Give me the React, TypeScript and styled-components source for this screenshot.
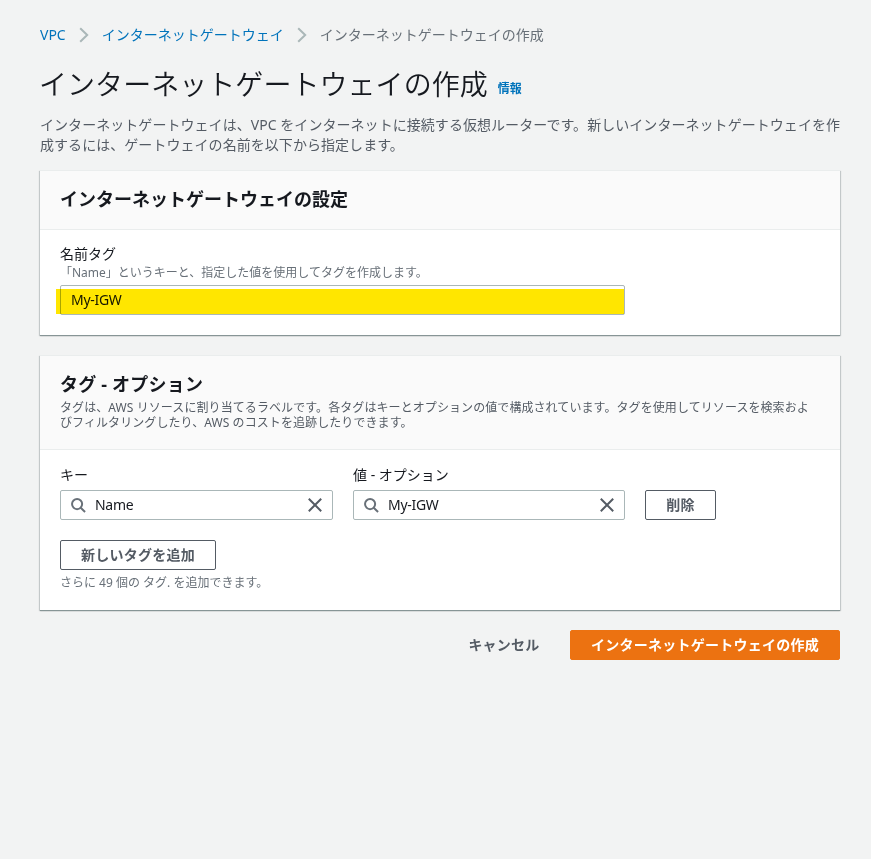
import React from "react";
import styled, { createGlobalStyle } from "styled-components";

const GlobalStyle = createGlobalStyle`
  *, *::before, *::after { box-sizing: border-box; }
  body {
    margin: 0;
    background: #f2f3f3;
    color: #16191f;
    font-family: "Noto Sans", "Noto Sans CJK JP", sans-serif;
    font-size: 14px;
    line-height: 20px;
  }
  h1, h2, p { margin: 0; }
  button, input { font: inherit; }
`;

const Page = styled.main`
  width: 871px;
  min-height: 859px;
  padding: 24px 31px 0 40px;
  background: #f2f3f3;
`;

const Breadcrumbs = styled.nav`
  display: flex;
  align-items: center;
  height: 22px;
  white-space: nowrap;
`;

const Crumb = styled.a<{ $current?: boolean }>`
  color: ${(p) => (p.$current ? "#687078" : "#0073bb")};
  text-decoration: none;
`;

const Chevron = styled.svg`
  width: 10px;
  height: 16px;
  margin: 0 13px;
  flex: none;
  fill: none;
  stroke: #aab7b8;
  stroke-width: 2;
`;

const TitleRow = styled.div`
  display: flex;
  align-items: flex-start;
  gap: 10px;
  height: 36px;
  margin: 20px 0 0 -1px;
  white-space: nowrap;
`;

const Title = styled.h1`
  font-size: 28px;
  line-height: 36px;
  font-weight: 350;
  letter-spacing: 0.05px;
`;

const InfoLink = styled.a`
  padding-top: 15px;
  color: #0073bb;
  font-size: 12px;
  line-height: 16px;
  font-weight: 700;
`;

const Intro = styled.p`
  margin-top: 13px;
  color: #545b64;
  letter-spacing: 0.05px;
  white-space: nowrap;
`;

const Card = styled.section<{ $gap: number }>`
  width: 800px;
  margin-top: ${(p) => p.$gap}px;
  background: #fff;
  border-top: 1px solid #eaeded;
  box-shadow: 0 1px 0 0 #879596, 0 1px 1px 0 rgba(0, 28, 36, 0.3),
    1px 1px 1px 0 rgba(0, 28, 36, 0.15), -1px 1px 1px 0 rgba(0, 28, 36, 0.15);
`;

const CardHeader = styled.header<{ $height: number }>`
  height: ${(p) => p.$height}px;
  padding: 17px 20px 0;
  background: #fafafa;
  border-bottom: 1px solid #eaeded;
`;

const CardTitle = styled.h2<{ $tracking?: number }>`
  font-size: 18px;
  line-height: 22px;
  font-weight: 700;
  letter-spacing: ${(p) => p.$tracking ?? 0}px;
`;

const CardDescription = styled.p`
  margin-top: 5px;
  color: #545b64;
  font-size: 12px;
  line-height: 15px;
  letter-spacing: 0.08px;
  white-space: nowrap;
`;

const CardBody = styled.div<{ $top: number; $bottom: number }>`
  padding: ${(p) => p.$top}px 20px ${(p) => p.$bottom}px;
`;

const Label = styled.label`
  display: block;
  line-height: 20px;
`;

const Hint = styled.p`
  margin-top: 1px;
  color: #687078;
  font-size: 12px;
  line-height: 16px;
`;

const InputBox = styled.div<{ $width: number; $gap: number }>`
  position: relative;
  display: flex;
  align-items: center;
  width: ${(p) => p.$width}px;
  height: 30px;
  margin-top: ${(p) => p.$gap}px;
  padding: 0 10px;
  background: #fff;
  border: 1px solid #aab7b8;
  border-radius: 2px;
`;

const TextInput = styled.input`
  flex: 1;
  min-width: 0;
  height: 28px;
  padding: 0 0 2px;
  border: 0;
  outline: 0;
  background: transparent;
  color: #16191f;
  letter-spacing: -0.3px;
`;

const Marker = styled.span`
  position: absolute;
  left: -5px;
  right: 0;
  top: 3px;
  bottom: 0;
  background: #ffe600;
  mix-blend-mode: multiply;
  pointer-events: none;
`;

const SearchIcon = styled.svg`
  width: 15px;
  height: 15px;
  margin-right: 9px;
  flex: none;
  fill: none;
  stroke: #687078;
  stroke-width: 2.1;
`;

const ClearIcon = styled.svg`
  width: 14px;
  height: 14px;
  flex: none;
  fill: none;
  stroke: #545b64;
  stroke-width: 2;
`;

const TagRow = styled.div`
  display: flex;
  align-items: flex-end;
  gap: 20px;
  margin-bottom: 20px;
`;

const Button = styled.button<{ $kind?: "primary" | "link"; $width: number }>`
  display: block;
  width: ${(p) => p.$width}px;
  height: 30px;
  padding: 0;
  border-radius: 2px;
  border: 1px solid
    ${(p) => (p.$kind === "primary" ? "#ec7211" : p.$kind === "link" ? "transparent" : "#545b64")};
  background: ${(p) => (p.$kind === "primary" ? "#ec7211" : p.$kind === "link" ? "transparent" : "#fff")};
  color: ${(p) => (p.$kind === "primary" ? "#fff" : "#545b64")};
  font-weight: 700;
  line-height: 20px;
  letter-spacing: 0.25px;
  white-space: nowrap;
`;

const LimitHint = styled(Hint)`
  margin-top: 5px;
`;

const Actions = styled.footer`
  display: flex;
  justify-content: flex-end;
  gap: 10px;
  width: 800px;
  margin-top: 20px;
`;

const Separator = () => (
  <Chevron viewBox="0 0 10 16">
    <path d="M1.2 1.2 L8.2 8 L1.2 14.8" />
  </Chevron>
);

interface TagFieldProps {
  label: string;
  value: string;
  width: number;
}

const TagField = ({ label, value, width }: TagFieldProps) => (
  <div>
    <Label>{label}</Label>
    <InputBox $width={width} $gap={5}>
      <SearchIcon viewBox="0 0 16 16">
        <circle cx="6.5" cy="6.5" r="5.4" />
        <path d="M10.4 10.4 L15 15" />
      </SearchIcon>
      <TextInput defaultValue={value} />
      <ClearIcon viewBox="0 0 14 14">
        <path d="M0.8 0.8 L13.2 13.2 M13.2 0.8 L0.8 13.2" />
      </ClearIcon>
    </InputBox>
  </div>
);

export default function App() {
  return (
    <>
      <GlobalStyle />
      <Page lang="ja">
        <Breadcrumbs>
          <Crumb>VPC</Crumb>
          <Separator />
          <Crumb>インターネットゲートウェイ</Crumb>
          <Separator />
          <Crumb $current>インターネットゲートウェイの作成</Crumb>
        </Breadcrumbs>

        <TitleRow>
          <Title>インターネットゲートウェイの作成</Title>
          <InfoLink>情報</InfoLink>
        </TitleRow>
        <Intro>
          インターネットゲートウェイは、VPC をインターネットに接続する仮想ルーターです。新しいインターネットゲートウェイを作
          <br />
          成するには、ゲートウェイの名前を以下から指定します。
        </Intro>

        <Card $gap={15}>
          <CardHeader $height={59}>
            <CardTitle>インターネットゲートウェイの設定</CardTitle>
          </CardHeader>
          <CardBody $top={14} $bottom={20}>
            <Label>名前タグ</Label>
            <Hint>「Name」というキーと、指定した値を使用してタグを作成します。</Hint>
            <InputBox $width={565} $gap={4}>
              <TextInput defaultValue="My-IGW" />
              <Marker />
            </InputBox>
          </CardBody>
        </Card>

        <Card $gap={20}>
          <CardHeader $height={94}>
            <CardTitle $tracking={0.2}>タグ - オプション</CardTitle>
            <CardDescription>
              タグは、AWS リソースに割り当てるラベルです。各タグはキーとオプションの値で構成されています。タグを使用してリソースを検索およ
              <br />
              びフィルタリングしたり、AWS のコストを追跡したりできます。
            </CardDescription>
          </CardHeader>
          <CardBody $top={15} $bottom={19}>
            <TagRow>
              <TagField label="キー" value="Name" width={273} />
              <TagField label="値 - オプション" value="My-IGW" width={272} />
              <Button $width={71}>削除</Button>
            </TagRow>
            <Button $width={156}>新しいタグを追加</Button>
            <LimitHint>さらに 49 個の タグ. を追加できます。</LimitHint>
          </CardBody>
        </Card>

        <Actions>
          <Button $kind="link" $width={112}>キャンセル</Button>
          <Button $kind="primary" $width={270}>インターネットゲートウェイの作成</Button>
        </Actions>
      </Page>
    </>
  );
}
